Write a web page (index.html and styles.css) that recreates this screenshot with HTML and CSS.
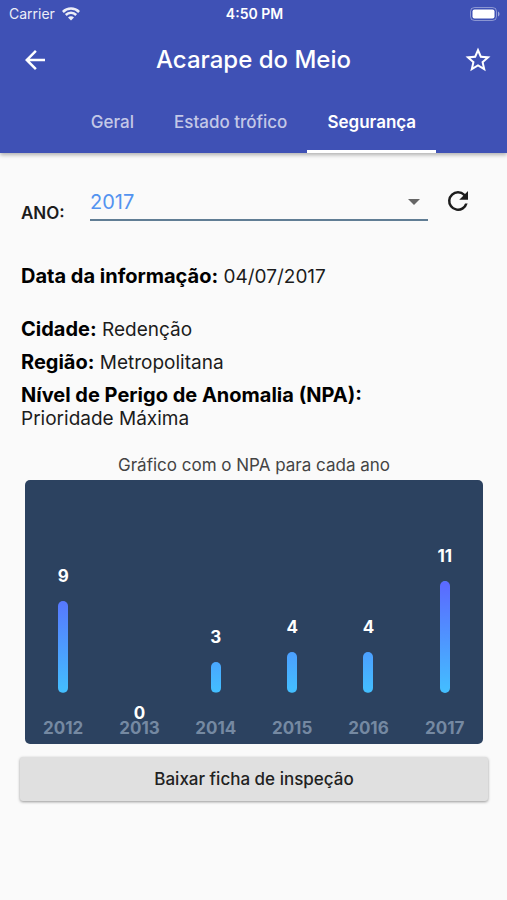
FILE: index.html
```html
<!DOCTYPE html>
<html lang="pt-BR">
<head>
    <meta charset="UTF-8">
    <meta name="viewport" content="width=device-width, initial-scale=1.0">
    <title>Acarape do Meio</title>
    <link rel="stylesheet" href="styles.css">
</head>
<body>
    <header class="app-header">
        <div class="status-bar">
            <div class="carrier">
                <span>Carrier</span>
                <svg class="wifi" viewBox="0 0 18 14" aria-hidden="true">
                    <path d="M.9 5a11.4 11.4 0 0 1 16.2 0M3.8 8a7.3 7.3 0 0 1 10.4 0" fill="none" stroke="currentColor" stroke-width="2.5"/>
                    <path d="M9 13.6L6 10.5a4.2 4.2 0 0 1 6 0z" fill="currentColor"/>
                </svg>
            </div>
            <span class="clock">4:50 PM</span>
            <svg class="battery" viewBox="0 0 30 14" aria-hidden="true">
                <rect x=".5" y=".5" width="26" height="13" rx="4" fill="none" stroke="currentColor" stroke-opacity=".4"/>
                <rect x="2.5" y="2.5" width="22" height="9" rx="2" fill="currentColor"/>
                <path d="M28 4.5c2 .8 2 4.2 0 5z" fill="currentColor" fill-opacity=".5"/>
            </svg>
        </div>

        <div class="title-bar">
            <button type="button" class="icon-button back" aria-label="Voltar">
                <svg viewBox="0 0 24 24"><path d="M20 11H7.83l5.59-5.59L12 4l-8 8 8 8 1.41-1.41L7.83 13H20v-2z"/></svg>
            </button>
            <h1>Acarape do Meio</h1>
            <button type="button" class="icon-button favorite" aria-label="Favoritar">
                <svg viewBox="0 0 24 24"><path d="M22 9.24l-7.19-.62L12 2 9.19 8.63 2 9.24l5.46 4.73L5.82 21 12 17.27 18.18 21l-1.63-7.03L22 9.24zM12 15.4l-3.76 2.27 1-4.28-3.32-2.88 4.38-.38L12 6.1l1.71 4.04 4.38.38-3.32 2.88 1 4.28L12 15.4z"/></svg>
            </button>
        </div>

        <nav class="tabs">
            <a href="#geral" class="tab">Geral</a>
            <a href="#trofico" class="tab">Estado trófico</a>
            <a href="#seguranca" class="tab active" aria-current="page">Segurança</a>
        </nav>
    </header>

    <main class="content" id="seguranca">
        <!-- Year filter -->
        <form class="year-form">
            <label for="ano">ANO:</label>
            <div class="select-box">
                <select id="ano" name="ano">
                    <option>2012</option>
                    <option>2013</option>
                    <option>2014</option>
                    <option>2015</option>
                    <option>2016</option>
                    <option selected>2017</option>
                </select>
                <svg class="arrow" viewBox="0 0 12 6" aria-hidden="true"><path d="M0 0h12L6 6z"/></svg>
            </div>
            <button type="button" class="icon-button reload" aria-label="Atualizar">
                <svg viewBox="0 0 24 24"><path d="M17.65 6.35A7.96 7.96 0 0 0 12 4a8 8 0 1 0 7.73 10h-2.08A6 6 0 1 1 12 6c1.66 0 3.14.69 4.22 1.78L13 11h7V4l-2.35 2.35z"/></svg>
            </button>
        </form>

        <!-- Details -->
        <section class="details">
            <p class="date"><strong>Data da informação:</strong> 04/07/2017</p>
            <p><strong>Cidade:</strong> Redenção</p>
            <p><strong>Região:</strong> Metropolitana</p>
            <p><strong>Nível de Perigo de Anomalia (NPA):</strong><br>Prioridade Máxima</p>
        </section>

        <!-- NPA chart, bar heights are value / 15 -->
        <figure class="chart">
            <figcaption>Gráfico com o NPA para cada ano</figcaption>
            <div class="plot">
                <div class="column">
                    <div class="track"><span class="value">9</span><div class="bar" style="height: 60%"></div></div>
                    <span class="year">2012</span>
                </div>
                <div class="column">
                    <div class="track"><span class="value zero">0</span></div>
                    <span class="year">2013</span>
                </div>
                <div class="column">
                    <div class="track"><span class="value">3</span><div class="bar" style="height: 20%"></div></div>
                    <span class="year">2014</span>
                </div>
                <div class="column">
                    <div class="track"><span class="value">4</span><div class="bar" style="height: 26.67%"></div></div>
                    <span class="year">2015</span>
                </div>
                <div class="column">
                    <div class="track"><span class="value">4</span><div class="bar" style="height: 26.67%"></div></div>
                    <span class="year">2016</span>
                </div>
                <div class="column">
                    <div class="track"><span class="value">11</span><div class="bar" style="height: 73.33%"></div></div>
                    <span class="year">2017</span>
                </div>
            </div>
        </figure>

        <button type="button" class="download">Baixar ficha de inspeção</button>
    </main>
</body>
</html>
```
FILE: styles.css
```css
/* Global Styles */
* {
    margin: 0;
    padding: 0;
    box-sizing: border-box;
    font-family: Inter, sans-serif;
}

body {
    background-color: #fafafa;
    color: #1c1c1c;
    min-height: 100vh;
}

/* Header */
.app-header {
    background: #3f51b5;
    color: white;
    box-shadow: 0 2px 4px rgba(0, 0, 0, 0.3);
}

.status-bar {
    display: grid;
    grid-template-columns: 1fr auto 1fr;
    align-items: center;
    height: 27px;
    padding: 0 7px 0 9px;
    font-size: 14px;
}

.carrier {
    display: flex;
    align-items: center;
    gap: 7px;
    opacity: 0.9;
}

.wifi {
    width: 18px;
    height: 14px;
}

.clock {
    font-weight: 600;
}

.battery {
    width: 30px;
    height: 14px;
    justify-self: end;
}

.title-bar {
    display: grid;
    grid-template-columns: 1fr auto 1fr;
    align-items: center;
    height: 65px;
    padding: 0 14px;
}

h1 {
    font-size: 24px;
    font-weight: 500;
}

.icon-button {
    display: flex;
    background: none;
    border: none;
    color: inherit;
    cursor: pointer;
}

.icon-button svg {
    width: 30px;
    height: 30px;
    fill: currentColor;
}

.back {
    justify-self: start;
    padding-left: 6px;
}

.favorite {
    justify-self: end;
}

/* Tabs */
.tabs {
    display: flex;
    justify-content: center;
}

.tab {
    height: 61px;
    padding: 0 20px;
    border-bottom: 3px solid transparent;
    color: rgba(255, 255, 255, 0.7);
    font-size: 17px;
    font-weight: 500;
    line-height: 60px;
    text-decoration: none;
}

.tab.active {
    border-color: white;
    color: white;
    font-weight: 600;
}

/* Main Content */
.content {
    padding: 28px 19px 20px 20px;
}

.year-form {
    display: flex;
    align-items: flex-start;
    padding: 0 15px 0 1px;
}

.year-form label {
    width: 69px;
    padding-top: 22px;
    font-size: 17px;
    font-weight: 600;
    line-height: 20px;
}

.select-box {
    position: relative;
    flex: 1;
}

select {
    display: block;
    width: 100%;
    height: 40px;
    padding-top: 3px;
    appearance: none;
    background: none;
    border: none;
    border-bottom: 2px solid #607d94;
    color: #5393f0;
    font-size: 20px;
}

/* Arrow over the right end of the select */
.arrow {
    position: absolute;
    top: 18px;
    right: 8px;
    width: 12px;
    height: 6px;
    fill: #666;
    pointer-events: none;
}

.reload {
    padding: 5px 0 0 15px;
}

/* Details */
.details {
    padding: 42px 0 0 1px;
    font-size: 19px;
    line-height: 23px;
}

.details p {
    margin-bottom: 10px;
}

.details .date {
    margin-bottom: 30px;
}

strong {
    color: black;
    font-size: 20px;
    font-weight: 700;
}

/* Chart */
.chart {
    padding: 14px 5px 0;
}

figcaption {
    margin-bottom: 4px;
    color: #444;
    font-size: 17px;
    line-height: 22px;
    text-align: center;
}

.plot {
    display: flex;
    align-items: flex-end;
    height: 264px;
    padding-bottom: 5px;
    border-radius: 5px;
    background: #2c4260;
}

.column {
    flex: 1;
    text-align: center;
}

.track {
    position: relative;
    display: flex;
    flex-direction: column;
    align-items: center;
    justify-content: flex-end;
    height: 153px;
    margin-bottom: 24px;
}

.value {
    margin-bottom: 14px;
    color: white;
    font-size: 17px;
    font-weight: 700;
    line-height: 22px;
}

/* Empty years have their value below the base line */
.value.zero {
    position: absolute;
    top: 100%;
    margin: 9px 0 0;
}

.bar {
    flex: none;
    width: 10px;
    border-radius: 5px;
    background: linear-gradient(#5b68ff, #43bfff) bottom / 100% 112px;
}

.year {
    display: block;
    color: #7589a2;
    font-size: 17px;
    font-weight: 700;
    line-height: 22px;
}

/* Download Button */
.download {
    display: block;
    width: 100%;
    height: 44px;
    margin-top: 13px;
    background: #e0e0e0;
    color: #222;
    border: none;
    border-radius: 3px;
    box-shadow: 0 1px 3px rgba(0, 0, 0, 0.4);
    cursor: pointer;
    font-size: 17px;
    font-weight: 500;
}
```
